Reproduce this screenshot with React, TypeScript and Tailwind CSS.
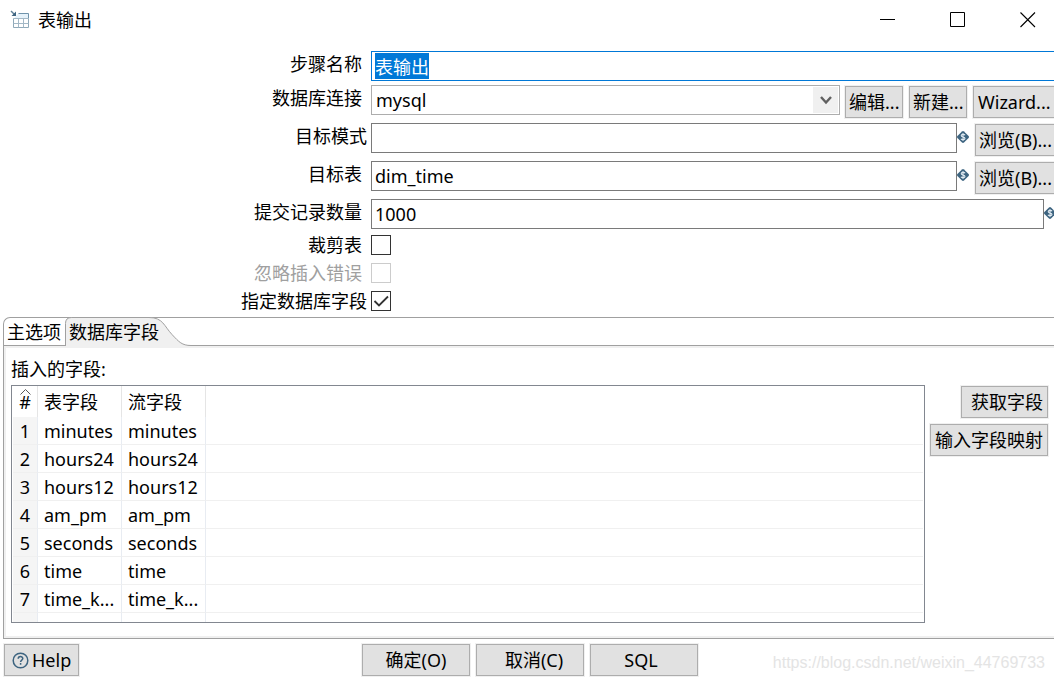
import { useEffect, useRef } from "react";
import type { ReactNode } from "react";

const buttonBase =
  "flex h-8 shrink-0 items-center border border-[#adadad] bg-[#e1e1e1] ring-1 ring-[#f0f0f0] whitespace-nowrap";
const inputBase =
  "h-[30px] min-w-0 flex-1 border border-[#7a7a7a] bg-white px-[3px] leading-6 outline-none";
const bodyCell =
  "border-r border-b border-r-[#e8ecf2] border-b-[#f0f0f0] p-0 pt-[2px] leading-[25px]";

const fields = ["minutes", "hours24", "hours12", "am_pm", "seconds", "time", "time_k..."];

function TableOutputIcon() {
  return (
    <svg width="20" height="20" viewBox="0 0 20 20" fill="none" aria-hidden="true">
      <path d="M8 3.500h10.500v5h-15V9" fill="#e6f2fa" />
      <path d="M8.500 3.500H18.500V8.500" stroke="#6f93ab" />
      <path d="M18.500 8.500V17.500H3.500V8.500" stroke="#8fa9b9" />
      <path d="M3.500 8.500H18.500M3.500 13.500H18.500M8.500 8.500V17.500M13.500 8.500V17.500" stroke="#a3b8c6" />
      <path d="M1 1l4 4" stroke="#5d7f96" strokeWidth="1.400" />
      <path d="M6 1.500V6H1.500z" fill="#3d6480" />
    </svg>
  );
}

function VariableIcon() {
  return (
    <svg className="mt-2 shrink-0" width="12" height="12" viewBox="0 0 12 12" aria-hidden="true">
      <path d="M5 .4Q6-.4 7 .4L11.600 5Q12.400 6 11.600 7L7 11.600Q6 12.400 5 11.600L.4 7Q-.4 6 .4 5z" fill="#3d6480" />
      <path
        d="M8 4.300C7.500 3.100 4.200 3 4.200 4.700S8 5.800 8 7.400 4.500 9 4 7.700M6 2v8"
        fill="none"
        stroke="#dfe9f0"
        strokeWidth="1.100"
      />
    </svg>
  );
}

function Label({ id, wide, muted, children }: { id: string; wide?: boolean; muted?: boolean; children: ReactNode }) {
  return (
    <label
      htmlFor={id}
      className={`w-[371px] shrink-0 text-right leading-[26px] ${wide ? "pr-1" : "pr-[9px]"} ${muted ? "text-[#a0a0a0]" : ""}`}
    >
      {children}
    </label>
  );
}

function Check({ id, label, wide, checked, disabled }: { id: string; label: string; wide?: boolean; checked?: boolean; disabled?: boolean }) {
  return (
    <div className="flex h-7 items-center">
      <Label id={id} wide={wide} muted={disabled}>
        {label}
      </Label>
      <span className="grid">
        <input
          id={id}
          type="checkbox"
          defaultChecked={checked}
          disabled={disabled}
          className="peer col-start-1 row-start-1 size-5 appearance-none border border-[#333333] bg-white disabled:border-[#cccccc]"
        />
        <svg
          className="pointer-events-none invisible col-start-1 row-start-1 peer-checked:visible"
          width="20"
          height="20"
          viewBox="0 0 20 20"
          fill="none"
          aria-hidden="true"
        >
          <path d="M3.500 10l4.500 4.500L17 5.500" stroke="#333333" strokeWidth="1.800" />
        </svg>
      </span>
    </div>
  );
}

export default function App() {
  const nameRef = useRef<HTMLInputElement>(null);

  useEffect(() => {
    nameRef.current?.focus();
    nameRef.current?.select();
  }, []);

  return (
    <main className="min-h-screen overflow-hidden bg-white font-['Noto_Sans','Noto_Sans_CJK_SC',sans-serif] text-lg leading-7 text-black">
      <header className="flex h-10 items-center justify-between pr-[18px] pl-[10px]">
        <h1 className="flex items-center gap-2">
          <TableOutputIcon />
          表输出
        </h1>
        <div className="flex gap-[54px]">
          <button aria-label="最小化">
            <svg width="16" height="16" viewBox="0 0 16 16" aria-hidden="true">
              <path d="M0 7.500h15" stroke="#000" />
            </svg>
          </button>
          <button aria-label="最大化">
            <svg width="16" height="16" viewBox="0 0 16 16" fill="none" aria-hidden="true">
              <path d="M.5.5h14v14H.5z" stroke="#000" />
            </svg>
          </button>
          <button aria-label="关闭">
            <svg width="16" height="16" viewBox="0 0 16 16" aria-hidden="true">
              <path d="M.5.5l14.500 14.500M15 .5L.5 15" stroke="#000" strokeWidth="1.100" />
            </svg>
          </button>
        </div>
      </header>

      <form className="pt-[11px]">
        <div className="flex h-[34px]">
          <Label id="step">步骤名称</Label>
          <input
            id="step"
            ref={nameRef}
            defaultValue="表输出"
            className="h-[30px] min-w-0 flex-1 border border-r-0 border-[#0078d7] bg-white px-[3px] leading-6 outline-none selection:bg-[#0078d7] selection:text-white"
          />
        </div>
        <div className="flex h-[38px]">
          <Label id="conn">数据库连接</Label>
          <div className="grid h-[30px] flex-1">
            <select
              id="conn"
              className="col-start-1 row-start-1 appearance-none border border-[#adadad] bg-white px-1 leading-6 outline-none"
            >
              <option>mysql</option>
            </select>
            <span className="pointer-events-none col-start-1 row-start-1 my-[2px] mr-[2px] grid w-[25px] place-items-center justify-self-end bg-[#f0f0f0]">
              <svg width="12" height="9" viewBox="0 0 12 9" fill="none" aria-hidden="true">
                <path d="M1 1l5 5.500L11 1" stroke="#606060" strokeWidth="2.400" />
              </svg>
            </span>
          </div>
          <div className="flex gap-[6px] pt-px pl-[5px]">
            <button type="button" className={`${buttonBase} w-[58px] pl-[3px]`}>编辑...</button>
            <button type="button" className={`${buttonBase} w-[58px] pl-[3px]`}>新建...</button>
            <button type="button" className={`${buttonBase} w-[81px] border-r-0 pl-1`}>Wizard...</button>
          </div>
        </div>
        <div className="flex h-[38px]">
          <Label id="schema" wide>目标模式</Label>
          <input id="schema" className={inputBase} />
          <VariableIcon />
          <div className="pt-px pl-[6px]">
            <button type="button" className={`${buttonBase} w-[79px] border-r-0 pl-[3px]`}>浏览(B)...</button>
          </div>
        </div>
        <div className="flex h-[38px]">
          <Label id="table">目标表</Label>
          <input id="table" defaultValue="dim_time" className={inputBase} />
          <VariableIcon />
          <div className="pt-px pl-[6px]">
            <button type="button" className={`${buttonBase} w-[79px] border-r-0 pl-[3px]`}>浏览(B)...</button>
          </div>
        </div>
        <div className="flex h-8">
          <Label id="commit">提交记录数量</Label>
          <input id="commit" defaultValue="1000" className={inputBase} />
          <span className="w-[10px] overflow-hidden">
            <VariableIcon />
          </span>
        </div>
        <Check id="truncate" label="裁剪表" />
        <Check id="ignore" label="忽略插入错误" disabled />
        <Check id="specify" label="指定数据库字段" wide checked />
      </form>

      <section className="mt-[2px] ml-[3px] rounded-tl-[7px] border border-r-0 border-[#a0a0a0]">
        <div role="tablist" className="flex h-7 border-b border-[#a0a0a0]">
          <button role="tab" aria-selected="false" className="w-[61px] pl-[3px] text-left whitespace-nowrap">
            主选项
          </button>
          <button role="tab" aria-selected="true" className="relative w-[126px] pl-1 text-left whitespace-nowrap">
            <svg className="absolute -top-px left-0" width="126" height="29" viewBox="0 0 126 29" aria-hidden="true">
              <path
                d="M.5 29V6.500Q.5.500 6.500.5H84C98 .5 99 9 107 17.500C114 25 117 28.500 126 28.500V29z"
                fill="#f0f0f0"
              />
              <path
                d="M.5 29V6.500Q.5.500 6.500.5H84C98 .5 99 9 107 17.500C114 25 117 28.500 126 28.500"
                fill="none"
                stroke="#a0a0a0"
              />
            </svg>
            <span className="relative">数据库字段</span>
          </button>
        </div>
        <div role="tabpanel" className="border-2 border-r-0 border-[#f0f0f0] pr-[6px] pb-[13px] pl-[5px]">
          <h2 className="pt-[7px] pb-[2px]">插入的字段:</h2>
          <div className="flex items-start gap-[5px]">
            <div className="h-[238px] flex-1 overflow-hidden border border-[#828790] px-px">
              <table className="w-full table-fixed border-separate border-spacing-0 text-left">
                <colgroup>
                  <col className="w-[25px]" />
                  <col className="w-[84px]" />
                  <col className="w-[84px]" />
                  <col />
                </colgroup>
                <thead>
                  <tr className="h-[31px]">
                    <th className="relative border-r border-[#e5e5e5] p-0 text-center font-normal">
                      <svg className="absolute top-[3px] left-[7px]" width="11" height="6" viewBox="0 0 11 6" fill="none" aria-hidden="true">
                        <path d="M.5 5.500l5-5 5 5" stroke="#5a5a5a" />
                      </svg>
                      #
                    </th>
                    <th className="border-r border-[#e5e5e5] p-0 pl-[6px] font-normal">表字段</th>
                    <th className="border-r border-[#e5e5e5] p-0 pl-[6px] font-normal">流字段</th>
                    <th className="p-0" />
                  </tr>
                </thead>
                <tbody>
                  {fields.map((field, index) => (
                    <tr key={field} className="h-7">
                      <td className={`${bodyCell} bg-[#f5f5f5] text-center`}>{index + 1}</td>
                      <td className={`${bodyCell} pl-[6px]`}>{field}</td>
                      <td className={`${bodyCell} pl-[6px]`}>{field}</td>
                      <td className="border-b border-[#f0f0f0] p-0" />
                    </tr>
                  ))}
                  <tr className="h-7">
                    <td className={`${bodyCell} bg-[#f5f5f5]`} />
                    <td className={bodyCell} />
                    <td className={bodyCell} />
                    <td className="p-0" />
                  </tr>
                </tbody>
              </table>
            </div>
            <div className="flex flex-col items-end gap-[6px] pt-px">
              <button type="button" className={`${buttonBase} w-[87px] justify-end pr-1`}>获取字段</button>
              <button type="button" className={`${buttonBase} w-[118px] justify-end pr-1`}>输入字段映射</button>
            </div>
          </div>
        </div>
      </section>

      <footer className="grid grid-cols-[358px_auto_1fr] pt-[5px] pb-[5px] pl-1">
        <div>
          <button type="button" className={`${buttonBase} w-[75px] gap-[3px] pl-[7px]`}>
            <svg width="17" height="17" viewBox="0 0 17 17" fill="none" aria-hidden="true">
              <circle cx="8.500" cy="8.500" r="7.300" stroke="#3d6480" strokeWidth="1.500" />
              <path
                d="M6.200 6.800c0-3 4.600-2.900 4.600-.2 0 1.500-2.200 1.600-2.200 3.300M8.600 11v1.700"
                stroke="#3d6480"
                strokeWidth="1.500"
              />
            </svg>
            Help
          </button>
        </div>
        <div className="flex gap-[6px]">
          <button type="button" className={`${buttonBase} w-[108px] justify-center`}>确定(O)</button>
          <button type="button" className={`${buttonBase} w-[108px] justify-center pl-2`}>取消(C)</button>
          <button type="button" className={`${buttonBase} w-[108px] justify-center pr-[6px]`}>SQL</button>
        </div>
        <p className="self-center justify-self-end pt-[6px] pr-[9px] font-['Liberation_Sans',sans-serif] text-base text-[#e4e4e4]">
          https://blog.csdn.net/weixin_44769733
        </p>
      </footer>
    </main>
  );
}
